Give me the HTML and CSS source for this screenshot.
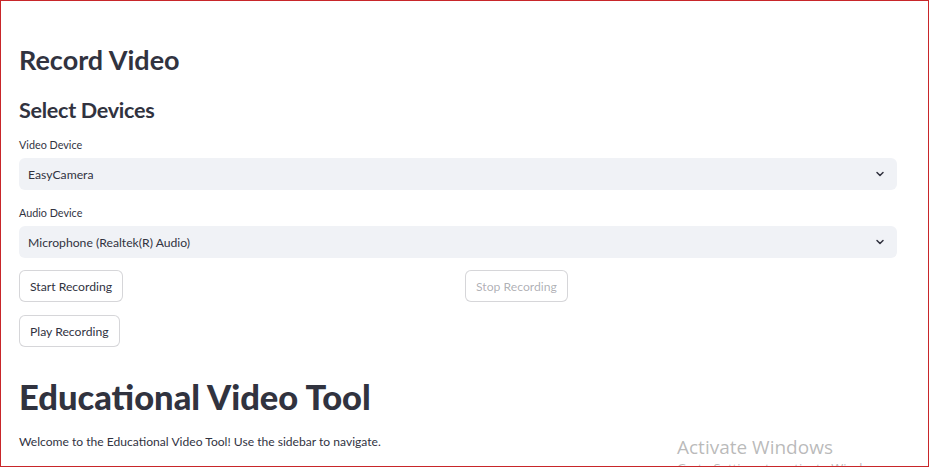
FILE: index.html
```html
<!DOCTYPE html>
<html lang="en">
<head>
<meta charset="utf-8">
<title>Record Video</title>
<link rel="stylesheet" href="styles.css">
</head>
<body>
<div class="frame">
  <main class="main">
    <h1 class="page-title">Record Video</h1>
    <h2 class="subheader">Select Devices</h2>

    <div class="field field-first">
      <label class="field-label">Video Device</label>
      <div class="select">
        <span class="select-value">EasyCamera</span>
        <svg class="chevron" width="12" height="12" viewBox="0 0 24 24" fill="none" stroke="#31333f" stroke-width="3" stroke-linecap="round" stroke-linejoin="round"><polyline points="6 9 12 15 18 9"/></svg>
      </div>
    </div>

    <div class="field">
      <label class="field-label">Audio Device</label>
      <div class="select">
        <span class="select-value">Microphone (Realtek(R) Audio)</span>
        <svg class="chevron" width="12" height="12" viewBox="0 0 24 24" fill="none" stroke="#31333f" stroke-width="3" stroke-linecap="round" stroke-linejoin="round"><polyline points="6 9 12 15 18 9"/></svg>
      </div>
    </div>

    <div class="columns">
      <div class="column">
        <button class="btn">Start Recording</button>
      </div>
      <div class="column">
        <button class="btn" disabled>Stop Recording</button>
      </div>
    </div>

    <div class="btn-row">
      <button class="btn">Play Recording</button>
    </div>

    <h1 class="big-title">Educational Video Tool</h1>
    <p class="body-text">Welcome to the Educational Video Tool! Use the sidebar to navigate.</p>
  </main>

  <div class="watermark">
    <div class="wm-title">Activate Windows</div>
    <div class="wm-sub">Go to Settings to activate Windows.</div>
  </div>
</div>
</body>
</html>
```

FILE: styles.css
```css
* { box-sizing: border-box; }

html, body {
  margin: 0;
  padding: 0;
  background: #ffffff;
}

body {
  width: 930px;
  height: 468px;
  overflow: hidden;
  font-family: "Lato", "Liberation Sans", sans-serif;
  color: #31333f;
}

.frame {
  position: relative;
  width: 929px;
  height: 467px;
  border: 1px solid #c8262a;
  overflow: hidden;
  background: #ffffff;
}

.main {
  padding: 40px 31px 0 18px;
  display: flex;
  flex-direction: column;
}

.page-title {
  margin: 1px 0 0 0;
  font-size: 27px;
  line-height: 36px;
  font-weight: 700;
  color: #31333f;
}

.subheader {
  margin: 18px 0 0 0;
  font-size: 21.6px;
  line-height: 28px;
  font-weight: 700;
  letter-spacing: -0.3px;
  color: #31333f;
}

.field {
  display: flex;
  flex-direction: column;
  gap: 6px;
  margin-top: 16px;
}

.field-first {
  margin-top: 14px;
}

.field-label {
  font-size: 10.8px;
  line-height: 14px;
  color: #31333f;
}

.select {
  height: 32px;
  background: #f0f2f6;
  border-radius: 6px;
  display: flex;
  align-items: center;
  justify-content: space-between;
  padding: 0 11px 0 9px;
}

.select-value {
  font-size: 12.2px;
  color: #31333f;
}

.chevron {
  display: block;
}

.columns {
  display: grid;
  grid-template-columns: 1fr 1fr;
  column-gap: 14px;
  margin-top: 12px;
}

.column {
  display: flex;
}

.btn-row {
  display: flex;
  margin-top: 13px;
}

.btn {
  height: 32px;
  padding: 0 10px;
  font-family: inherit;
  font-size: 12.2px;
  color: #31333f;
  background: #ffffff;
  border: 1px solid rgba(49, 51, 63, 0.2);
  border-radius: 6px;
}

.btn:disabled {
  color: rgba(49, 51, 63, 0.4);
}

.big-title {
  margin: 28px 0 0 0;
  font-size: 34.5px;
  line-height: 44px;
  font-weight: 900;
  color: #31333f;
}

.body-text {
  margin: 13px 0 0 0;
  font-size: 12.1px;
  line-height: 20px;
  color: #31333f;
}

.watermark {
  position: absolute;
  left: 676px;
  top: 434px;
  color: rgba(140, 140, 140, 0.6);
  font-family: "Open Sans", "Liberation Sans", sans-serif;
}

.wm-title {
  font-size: 19px;
  line-height: 24px;
}

.wm-sub {
  font-size: 13px;
  line-height: 18px;
}
```
